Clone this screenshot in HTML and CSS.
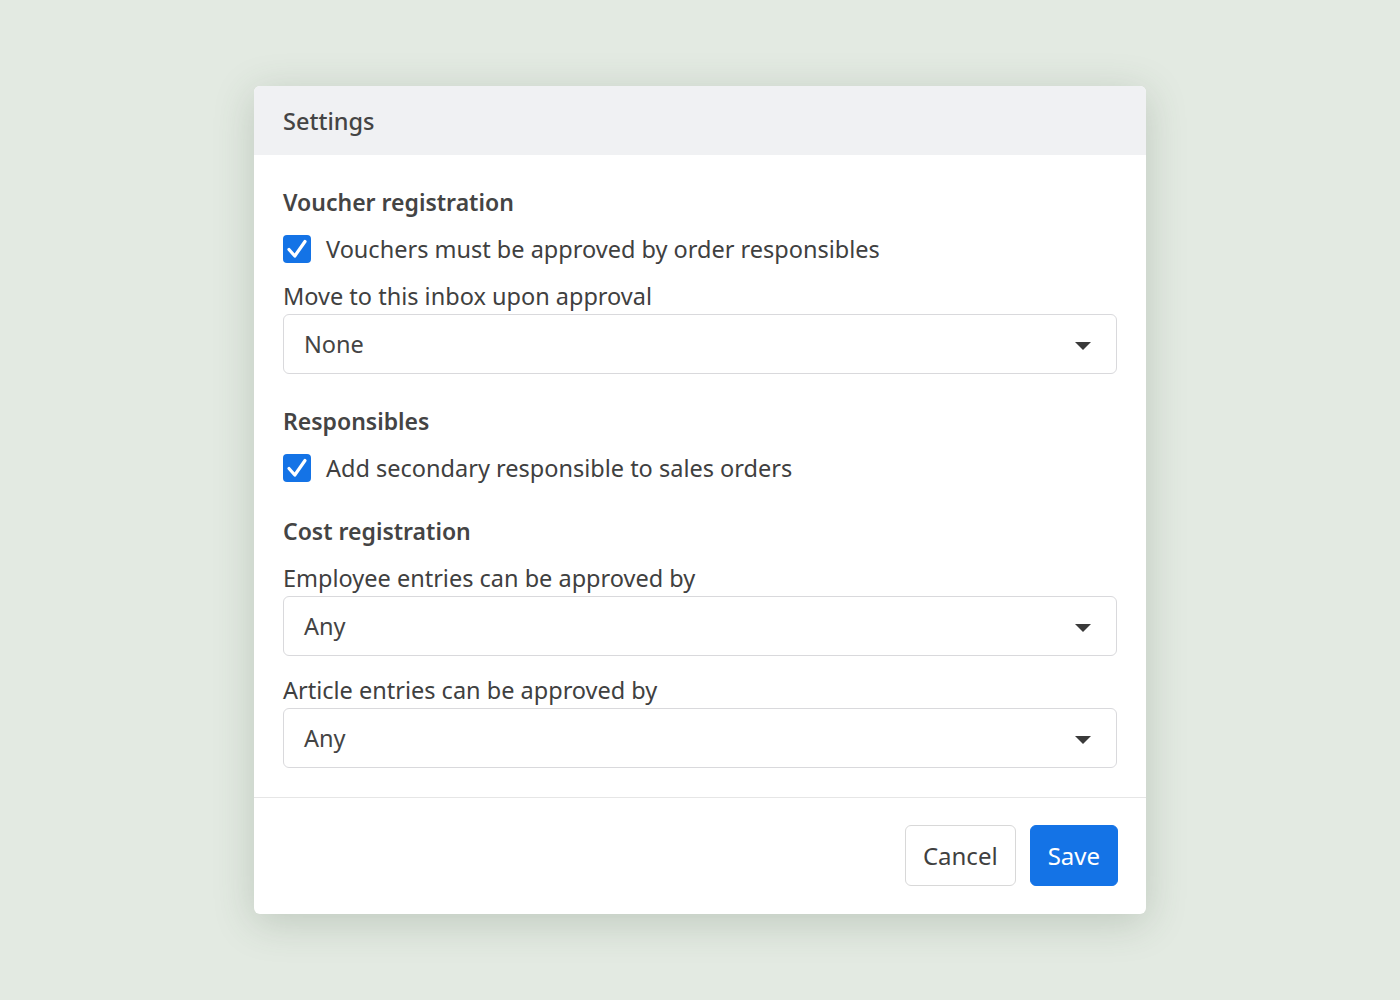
FILE: index.html
```html
<!DOCTYPE html>
<html lang="en">
<head>
    <meta charset="UTF-8">
    <meta name="viewport" content="width=device-width, initial-scale=1.0">
    <title>Settings</title>
    <link rel="stylesheet" href="styles.css">
</head>
<body>
    <div class="modal">
        <div class="modal-header">Settings</div>

        <div class="modal-body">
            <div class="section">
                <h3>Voucher registration</h3>
                <label class="check-row">
                    <span class="checkbox">
                        <svg viewBox="0 0 28 28" width="28" height="28"><path d="M6 14.5 L11.8 21 L22 6.5" fill="none" stroke="#fff" stroke-width="3.2" stroke-linecap="round" stroke-linejoin="round"/></svg>
                    </span>
                    Vouchers must be approved by order responsibles
                </label>
                <div class="field">
                    <div class="field-label">Move to this inbox upon approval</div>
                    <div class="select">None<span class="caret"></span></div>
                </div>
            </div>

            <div class="section">
                <h3>Responsibles</h3>
                <label class="check-row">
                    <span class="checkbox">
                        <svg viewBox="0 0 28 28" width="28" height="28"><path d="M6 14.5 L11.8 21 L22 6.5" fill="none" stroke="#fff" stroke-width="3.2" stroke-linecap="round" stroke-linejoin="round"/></svg>
                    </span>
                    Add secondary responsible to sales orders
                </label>
            </div>

            <div class="section">
                <h3>Cost registration</h3>
                <div class="field">
                    <div class="field-label">Employee entries can be approved by</div>
                    <div class="select">Any<span class="caret"></span></div>
                </div>
                <div class="field">
                    <div class="field-label">Article entries can be approved by</div>
                    <div class="select">Any<span class="caret"></span></div>
                </div>
            </div>
        </div>

        <div class="modal-footer">
            <button class="btn">Cancel</button>
            <button class="btn btn-primary">Save</button>
        </div>
    </div>
</body>
</html>
```

FILE: styles.css
```css
body {
    font-family: "Noto Sans", "Open Sans", sans-serif;
    display: flex;
    justify-content: center;
    align-items: center;
    min-height: 100vh;
    margin: 0;
    background-color: #e3eae2;
    color: #404040;
}
.modal {
    width: 892px;
    background-color: #ffffff;
    border-radius: 6px;
    box-shadow: 0 8px 40px rgba(60, 80, 60, 0.22);
    overflow: hidden;
}
.modal-header {
    background-color: #f0f1f3;
    height: 69px;
    padding: 0 29px;
    display: flex;
    align-items: center;
    font-size: 23.5px;
    font-weight: 500;
    color: #444;
}
.modal-body {
    padding: 31px 29px 29px;
}
.section {
    display: flex;
    flex-direction: column;
    gap: 15px;
}
.section + .section {
    margin-top: 31px;
}
h3 {
    margin: 0;
    font-size: 23px;
    line-height: 32px;
    font-weight: 600;
    color: #444;
}
.check-row {
    display: flex;
    align-items: center;
    gap: 15px;
    font-size: 23.5px;
    line-height: 32px;
}
.checkbox {
    width: 28px;
    height: 28px;
    border-radius: 4px;
    background-color: #1473e6;
    display: flex;
}
.field {
    display: flex;
    flex-direction: column;
    gap: 2px;
}
.field + .field {
    margin-top: 3px;
}
.field-label {
    font-size: 23.5px;
    line-height: 32px;
}
.select {
    position: relative;
    height: 58px;
    border: 1px solid #d9d9dc;
    border-radius: 6px;
    padding: 0 20px;
    display: flex;
    align-items: center;
    font-size: 23.5px;
    color: #444;
}
.caret {
    position: absolute;
    right: 25px;
    top: 27px;
    width: 0;
    height: 0;
    border-left: 8px solid transparent;
    border-right: 8px solid transparent;
    border-top: 8px solid #3a3a3a;
}
.modal-footer {
    border-top: 1px solid #e6e6e6;
    padding: 27px 28px 28px;
    display: flex;
    justify-content: flex-end;
    gap: 14px;
}
.btn {
    font-family: inherit;
    font-size: 24px;
    height: 61px;
    padding: 0 17px;
    border: 1px solid #d8d8d8;
    border-radius: 6px;
    background-color: #fff;
    color: #404040;
    cursor: pointer;
}
.btn-primary {
    background-color: #1473e6;
    border-color: #1473e6;
    color: #fff;
}
```
